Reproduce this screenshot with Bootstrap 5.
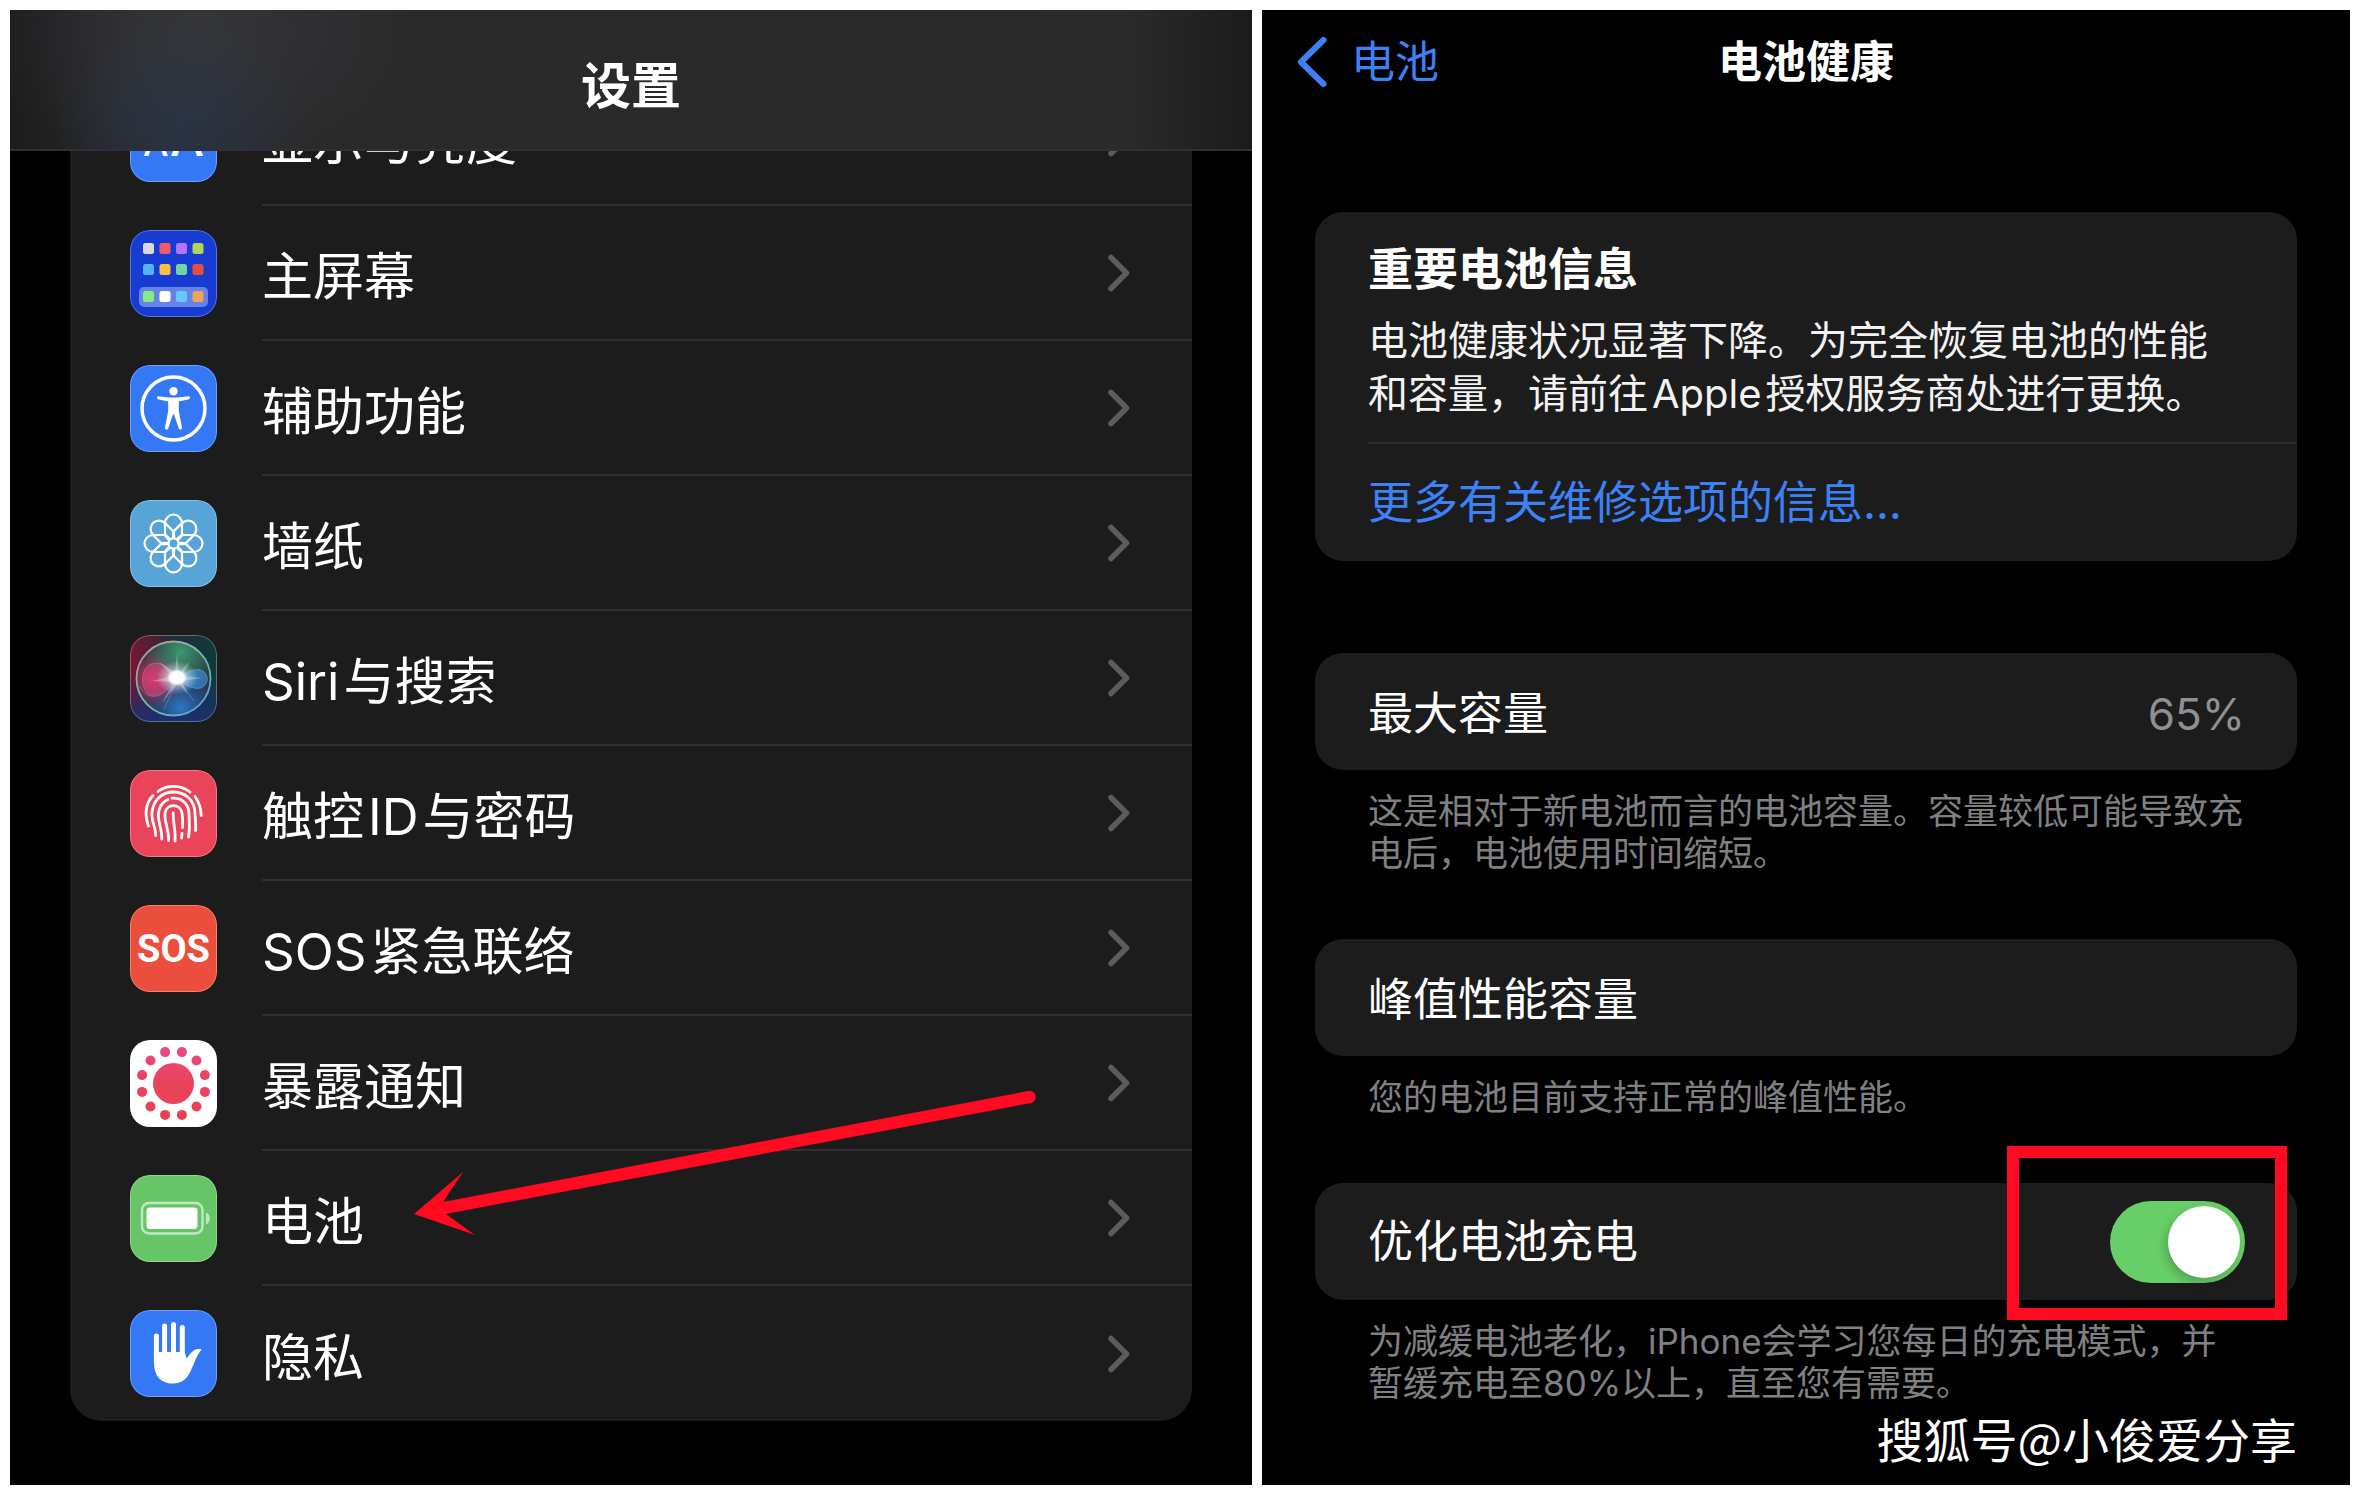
<!DOCTYPE html>
<html lang="zh-CN" data-bs-theme="dark">
<head>
<meta charset="utf-8">
<meta name="viewport" content="width=device-width, initial-scale=1">
<title>设置 – 电池健康</title>
<link href="https://cdn.jsdelivr.net/npm/bootstrap@5.3.0/dist/css/bootstrap.min.css" rel="stylesheet">
<style>
  body { background: #fff; color: #fff; font-family: Inter, "Noto Sans CJK SC", sans-serif; }
  h1, h2, p { margin: 0; }
  a { text-decoration: none; }
  .shots { display: grid; grid-template-columns: minmax(0, 1242fr) minmax(0, 1088fr); min-height: 100vh; padding: 10px; gap: 10px; }
  .shot { background: #000; overflow: hidden; position: relative; }
  .latin { margin: 0 4px; }
  .latin-start { margin-right: 4px; }

  /* settings list */
  .bar-settings {
    position: relative; z-index: 2; height: 141px; padding-top: 12px; border-bottom: 2px solid #303031;
    background:
      radial-gradient(ellipse 130px 110px at 170px 120px, rgba(38, 60, 100, .4), transparent),
      radial-gradient(ellipse 220px 150px at 190px 20px, rgba(64, 66, 72, .5), transparent),
      linear-gradient(90deg, #1c1c1d, #29292a 10%, #2a2a2a 90%, #1b1b1b);
  }
  .bar-settings h1 { font-size: 50px; line-height: 60px; font-weight: 700; }
  .settings-list { margin: -80px 60px 60px; border-radius: 0 0 32px 32px; background: #1c1c1d; overflow: hidden; }
  .settings-item { height: 135px; padding-left: 60px; color: #fff; }
  .settings-item:hover { color: #fff; }
  .app-icon { width: 87px; height: 87px; flex: none; border-radius: 20px; }
  .settings-text { margin-left: 45px; padding-right: 62px; border-bottom: 2px solid #303031; font-size: 51px; line-height: 60px; }
  .settings-item:last-child .settings-text { border-bottom: 0; }
  .chevron { width: 22px; height: 38px; flex: none; }
  .arrow { position: absolute; left: 400px; top: 1069px; width: 640px; height: 170px; z-index: 3; pointer-events: none; }

  /* battery health */
  .shot-health { padding: 0 53px; }
  .bar-health { height: 104px; margin: 0 -18px 98px; display: grid; grid-template-columns: 1fr auto 1fr; align-items: center; font-size: 44px; line-height: 60px; }
  .bar-health h1 { font-size: 44px; line-height: 60px; font-weight: 700; }
  .bar-health a, .more-link { color: #3c82f6; }
  .back-icon { width: 30px; height: 52px; margin-right: 24px; }
  .panel { background: #1c1c1d; border-radius: 28px; padding-left: 53px; }
  .panel-row { height: 117px; padding-right: 52px; font-size: 45px; line-height: 60px; }
  .panel-info { padding: 28px 52px 22px 0; border-bottom: 2px solid #2d2d2f; }
  .panel-info h2 { font-size: 45px; line-height: 60px; font-weight: 700; }
  .panel-info p { font-size: 40px; line-height: 53px; margin-top: 14px; color: #f2f2f2; }
  .percent { color: #8f8f94; font-size: 44px; }
  .footnote { font-size: 35px; line-height: 42px; color: #808083; padding: 20px 0 0 53px; white-space: nowrap; }
  .gap-card { margin-top: 65px; }
  .gap-first { margin-top: 92px; }
  .form-switch .form-check-input.ios-switch {
    width: 135px; height: 82px; margin: 0; float: none; border: 0; border-radius: 41px; background: #68ce67;
    box-shadow: none; position: relative;
  }
  .ios-switch::after { content: ""; position: absolute; right: 5px; top: 5px; width: 72px; height: 72px; border-radius: 50%; background: #fff; box-shadow: -3px 5px 10px rgba(0, 0, 0, .2); }
  .callout-box { position: absolute; right: 10px; top: -37px; width: 280px; height: 174px; border: 12px solid #ff0a20; pointer-events: none; }
  .watermark { font-family: "Noto Sans CJK SC", sans-serif; font-size: 47px; line-height: 60px; padding-top: 4px; text-align: right; }
</style>
</head>
<body>
<svg width="0" height="0" class="position-absolute" aria-hidden="true">
  <defs>
    <symbol id="chev" viewBox="0 0 22 38"><path d="M3 3.5 18.5 19 3 34.500" fill="none" stroke="#5c5c5f" stroke-width="5.500" stroke-linecap="round" stroke-linejoin="round"/></symbol>
    <path id="petal" d="M-3-4-8.500-9V-20A8.500 9 0 0 1 8.500-20V-9L3-4"/>
    <linearGradient id="expo" x1="0" y1="10" x2="0" y2="77" gradientUnits="userSpaceOnUse"><stop stop-color="#e84c7c"/><stop offset=".45" stop-color="#e8445e"/><stop offset="1" stop-color="#ec4052"/></linearGradient>
    <linearGradient id="siriTop" x1="0" x2="1"><stop stop-color="#7a1632"/><stop offset=".5" stop-color="#232a38"/><stop offset="1" stop-color="#0d3c38"/></linearGradient>
    <linearGradient id="siriLow" x1="0" x2="0" y1="0" y2="1"><stop offset=".45" stop-color="#16306e" stop-opacity="0"/><stop offset="1" stop-color="#1c2f70"/></linearGradient>
    <radialGradient id="orbGreen" cx=".6" cy=".15" r=".5"><stop stop-color="#3fa274" stop-opacity=".9"/><stop offset="1" stop-color="#3fa274" stop-opacity="0"/></radialGradient>
    <radialGradient id="orbPink" cx=".22" cy=".5" r=".4"><stop stop-color="#d0346a"/><stop offset="1" stop-color="#c02860" stop-opacity="0"/></radialGradient>
    <radialGradient id="orbBlue" cx=".6" cy=".9" r=".55"><stop stop-color="#2f78c8"/><stop offset="1" stop-color="#1c4aa0" stop-opacity="0"/></radialGradient>
    <radialGradient id="orbGlow"><stop stop-color="#fff"/><stop offset=".35" stop-color="#fff" stop-opacity=".95"/><stop offset=".5" stop-color="#dff2f8" stop-opacity=".5"/><stop offset="1" stop-color="#bfe8f5" stop-opacity="0"/></radialGradient>
    <linearGradient id="orbRim" x1="0" x2="1" y1="0" y2="1"><stop stop-color="#c88a9c"/><stop offset=".5" stop-color="#6fc0a8"/><stop offset="1" stop-color="#5b9be0"/></linearGradient>
    <symbol id="edge" viewBox="0 0 87 87"><rect x=".5" y=".5" width="86" height="86" rx="19.500" fill="none" stroke="#fff" stroke-opacity=".3"/></symbol>
  </defs>
</svg>

<main class="shots">
  <section class="shot shot-settings">
    <header class="bar-settings d-flex align-items-center justify-content-center"><h1>设置</h1></header>
    <nav class="settings-list d-flex flex-column">
      <a href="#" class="settings-item d-flex align-items-center">
        <svg class="app-icon" viewBox="0 0 87 87"><rect width="87" height="87" fill="#3478f6"/><g fill="#fff" font-family="Inter, sans-serif" font-weight="500"><text x="13" y="61" font-size="36">A</text><text x="40" y="61" font-size="48">A</text></g><use href="#edge"/></svg>
        <span class="settings-text d-flex align-items-center justify-content-between flex-grow-1 align-self-stretch"><span class="pt-2">显示与亮度</span><svg class="chevron"><use href="#chev"/></svg></span>
      </a>
      <a href="#" class="settings-item d-flex align-items-center">
        <svg class="app-icon" viewBox="0 0 87 87"><rect width="87" height="87" fill="#173cd2"/><rect x="9" y="57" width="69" height="20" rx="5" fill="#6883e6"/>
          <g><rect x="13" y="13" width="11" height="11" rx="2.500" fill="#d9d9dc"/><rect x="29.500" y="13" width="11" height="11" rx="2.500" fill="#f25a6a"/><rect x="46" y="13" width="11" height="11" rx="2.500" fill="#b176f8"/><rect x="62.500" y="13" width="11" height="11" rx="2.500" fill="#b5d25c"/>
          <rect x="13" y="34" width="11" height="11" rx="2.500" fill="#52b4fa"/><rect x="29.500" y="34" width="11" height="11" rx="2.500" fill="#f8c23c"/><rect x="46" y="34" width="11" height="11" rx="2.500" fill="#6ed6a0"/><rect x="62.500" y="34" width="11" height="11" rx="2.500" fill="#ea4b3c"/>
          <rect x="13" y="61" width="11" height="11" rx="2.500" fill="#86ea86"/><rect x="29.500" y="61" width="11" height="11" rx="2.500" fill="#fff"/><rect x="46" y="61" width="11" height="11" rx="2.500" fill="#66c8fa"/><rect x="62.500" y="61" width="11" height="11" rx="2.500" fill="#f2a25c"/></g><use href="#edge"/></svg>
        <span class="settings-text d-flex align-items-center justify-content-between flex-grow-1 align-self-stretch"><span class="pt-2">主屏幕</span><svg class="chevron"><use href="#chev"/></svg></span>
      </a>
      <a href="#" class="settings-item d-flex align-items-center">
        <svg class="app-icon" viewBox="0 0 87 87"><rect width="87" height="87" fill="#3478f6"/><circle cx="43.500" cy="43.500" r="31.500" fill="none" stroke="#fff" stroke-width="3.500"/><circle cx="43.500" cy="26.200" r="4.200" fill="#fff"/><path d="M28.500 31.200 39 32.400H48L58.500 31.200A1.600 1.600 0 0 1 59 34.300L48.800 36.500V46L52 62.500A1.700 1.700 0 0 1 48.800 63.600L44 49.500H43L38.200 63.600A1.700 1.700 0 0 1 35 62.500L38.200 46V36.500L28 34.300A1.600 1.600 0 0 1 28.500 31.200Z" fill="#fff"/><use href="#edge"/></svg>
        <span class="settings-text d-flex align-items-center justify-content-between flex-grow-1 align-self-stretch"><span class="pt-2">辅助功能</span><svg class="chevron"><use href="#chev"/></svg></span>
      </a>
      <a href="#" class="settings-item d-flex align-items-center">
        <svg class="app-icon" viewBox="0 0 87 87"><rect width="87" height="87" fill="#57a5d8"/><g transform="translate(43.500 43.500)" fill="none" stroke="#fff" stroke-width="2.200" stroke-linejoin="round"><use href="#petal"/><use href="#petal" transform="rotate(45)"/><use href="#petal" transform="rotate(90)"/><use href="#petal" transform="rotate(135)"/><use href="#petal" transform="rotate(180)"/><use href="#petal" transform="rotate(225)"/><use href="#petal" transform="rotate(270)"/><use href="#petal" transform="rotate(315)"/><circle r="5"/></g><use href="#edge"/></svg>
        <span class="settings-text d-flex align-items-center justify-content-between flex-grow-1 align-self-stretch"><span class="pt-2">墙纸</span><svg class="chevron"><use href="#chev"/></svg></span>
      </a>
      <a href="#" class="settings-item d-flex align-items-center">
        <svg class="app-icon" viewBox="0 0 87 87"><rect width="87" height="87" fill="url(#siriTop)"/><rect width="87" height="87" fill="url(#siriLow)"/>
          <circle cx="43.500" cy="43.500" r="37" fill="#2a3640"/><circle cx="43.500" cy="43.500" r="37" fill="url(#orbBlue)"/><circle cx="43.500" cy="43.500" r="37" fill="url(#orbPink)"/><circle cx="43.500" cy="43.500" r="37" fill="url(#orbGreen)"/>
          <path d="M47 43C40 32 30 26 21 29 10 34 10 55 20 60 30 62 38 54 47 43Z" fill="#e0447c" fill-opacity=".5" stroke="#e88aac" stroke-opacity=".4"/><path d="M47 43C56 37 66 32 73 36 80 41 78 50 71 53 62 55 54 49 47 43Z" fill="#3f93ea" fill-opacity=".6" stroke="#7fc4f2" stroke-opacity=".4"/><path d="M9 50C18 68 34 64 47 43M48 44 64 66M48 44 34 74" fill="none" stroke="#8ab4dc" stroke-opacity=".4"/>
          <path d="M47 18 49 38 60 26 52 41 72 43 52 46 58 60 48 48 32 68 43 47 22 46 42 41 28 26 45 38Z" fill="#fff" fill-opacity=".3"/>
          <ellipse cx="47" cy="42.500" rx="21" ry="17" fill="url(#orbGlow)"/><circle cx="43.500" cy="43.500" r="37" fill="none" stroke="url(#orbRim)" stroke-width="1.800"/><use href="#edge"/></svg>
        <span class="settings-text d-flex align-items-center justify-content-between flex-grow-1 align-self-stretch"><span class="pt-2"><span class="latin-start">Siri</span>与搜索</span><svg class="chevron"><use href="#chev"/></svg></span>
      </a>
      <a href="#" class="settings-item d-flex align-items-center">
        <svg class="app-icon" viewBox="0 0 87 87"><rect width="87" height="87" fill="#ea445a"/><g fill="none" stroke="#fff" stroke-width="2.800" stroke-linecap="round"><path d="M28 21.500C37 14.500 51 14.500 60 22M23 25.500C16 33 14 43 18.500 56M65 26.500C69 32 71 38 71.200 45.500"/><path d="M25.700 65.500C26 57 21 52 22 42 23.500 30 32 22 43.500 22 56 22 65 31 65 44 65.500 51 66 55 65.600 60.500"/><path d="M31.700 69C32.500 60 27.500 52 28.500 43 29.500 36 33 31.500 38 29.500M42 28.200C52 27.500 58.500 34 59 43 59.500 52 60 60 58.500 67"/><path d="M38.500 70.500C39.500 61 34 52 35 43 36.500 33.500 50 33 52 43 52.800 48 52.800 53 52.500 57.500M52 63.500 51.500 68"/><path d="M43.200 43C43 53 46 62 45 71"/></g><use href="#edge"/></svg>
        <span class="settings-text d-flex align-items-center justify-content-between flex-grow-1 align-self-stretch"><span class="pt-2">触控<span class="latin">ID</span>与密码</span><svg class="chevron"><use href="#chev"/></svg></span>
      </a>
      <a href="#" class="settings-item d-flex align-items-center">
        <svg class="app-icon" viewBox="0 0 87 87"><rect width="87" height="87" fill="#eb4e3d"/><text x="43.500" y="57" text-anchor="middle" font-family="Roboto, sans-serif" font-weight="700" font-size="38" fill="#fff">SOS</text><use href="#edge"/></svg>
        <span class="settings-text d-flex align-items-center justify-content-between flex-grow-1 align-self-stretch"><span class="pt-2"><span class="latin-start">SOS</span>紧急联络</span><svg class="chevron"><use href="#chev"/></svg></span>
      </a>
      <a href="#" class="settings-item d-flex align-items-center">
        <svg class="app-icon" viewBox="0 0 87 87"><rect width="87" height="87" fill="#fff"/><g fill="url(#expo)"><circle cx="43.500" cy="43.500" r="20.500"/><circle cx="51.900" cy="12.100" r="5"/><circle cx="66.500" cy="20.500" r="5"/><circle cx="74.900" cy="35.100" r="5"/><circle cx="74.900" cy="51.900" r="5"/><circle cx="66.500" cy="66.500" r="5"/><circle cx="51.900" cy="74.900" r="5"/><circle cx="35.100" cy="74.900" r="5"/><circle cx="20.500" cy="66.500" r="5"/><circle cx="12.100" cy="51.900" r="5"/><circle cx="12.100" cy="35.100" r="5"/><circle cx="20.500" cy="20.500" r="5"/><circle cx="35.100" cy="12.100" r="5"/></g></svg>
        <span class="settings-text d-flex align-items-center justify-content-between flex-grow-1 align-self-stretch"><span class="pt-2">暴露通知</span><svg class="chevron"><use href="#chev"/></svg></span>
      </a>
      <a href="#" class="settings-item d-flex align-items-center">
        <svg class="app-icon" viewBox="0 0 87 87"><rect width="87" height="87" fill="#66c667"/><rect x="12" y="28" width="60.500" height="30.500" rx="7" fill="none" stroke="#fff" stroke-opacity=".6" stroke-width="2.400"/><rect x="16.500" y="32.500" width="51" height="21.500" rx="3.500" fill="#fff"/><path d="M76 37.500C81 39 81 48 76 49.500Z" fill="#fff" fill-opacity=".6"/><use href="#edge"/></svg>
        <span class="settings-text d-flex align-items-center justify-content-between flex-grow-1 align-self-stretch"><span class="pt-2">电池</span><svg class="chevron"><use href="#chev"/></svg></span>
      </a>
      <a href="#" class="settings-item d-flex align-items-center">
        <svg class="app-icon" viewBox="0 0 87 87"><rect width="87" height="87" fill="#3478f6"/><path d="M26.400 26V46M34.600 16V46M43.500 14.500V46M52.300 17.500V48" stroke="#fff" stroke-width="5" stroke-linecap="round"/><path d="M23.900 42H54.800L56.500 48.500 60 44C63 40 67.500 38 71.500 39.500 67 45 65 51 62 58 58 68 53 73.500 42.500 73.500 31 73.500 23.900 66 23.900 52Z" fill="#fff"/><use href="#edge"/></svg>
        <span class="settings-text d-flex align-items-center justify-content-between flex-grow-1 align-self-stretch"><span class="pt-2">隐私</span><svg class="chevron"><use href="#chev"/></svg></span>
      </a>
    </nav>
    <svg class="arrow" viewBox="0 0 640 170" aria-hidden="true"><path d="M14 146 63 104 43 134 628 23A6 6 0 0 1 631 35L46 146 75 167Z" transform="translate(-10 -11)" fill="#ff0a20"/></svg>
  </section>

  <section class="shot shot-health">
    <header class="bar-health">
      <a href="#" class="d-flex align-items-center"><svg class="back-icon" viewBox="0 0 30 52"><path d="M26.500 4 4 26 26.500 48" fill="none" stroke="#3c82f6" stroke-width="6" stroke-linecap="round" stroke-linejoin="round"/></svg>电池</a>
      <h1>电池健康</h1>
    </header>

    <div class="panel">
      <div class="panel-info">
        <h2>重要电池信息</h2>
        <p class="text-nowrap">电池健康状况显著下降。为完全恢复电池的性能<br>和容量，请前往<span class="latin">Apple</span>授权服务商处进行更换。</p>
      </div>
      <a href="#" class="more-link panel-row d-flex align-items-center">更多有关维修选项的信息…</a>
    </div>

    <div class="panel gap-first"><div class="panel-row d-flex align-items-center justify-content-between pt-1"><span>最大容量</span><span class="percent">65%</span></div></div>
    <p class="footnote">这是相对于新电池而言的电池容量。容量较低可能导致充<br>电后，电池使用时间缩短。</p>

    <div class="panel gap-card"><div class="panel-row d-flex align-items-center pt-1">峰值性能容量</div></div>
    <p class="footnote">您的电池目前支持正常的峰值性能。</p>

    <div class="panel gap-card position-relative">
      <div class="panel-row form-switch d-flex align-items-center justify-content-between ps-0">
        <label for="optimized">优化电池充电</label>
        <input class="form-check-input ios-switch" type="checkbox" role="switch" id="optimized" checked>
      </div>
      <div class="callout-box"></div>
    </div>
    <p class="footnote">为减缓电池老化，iPhone会学习您每日的充电模式，并<br>暂缓充电至80%以上，直至您有需要。</p>
    <p class="watermark">搜狐号@小俊爱分享</p>
  </section>
</main>
<script src="https://cdn.jsdelivr.net/npm/bootstrap@5.3.0/dist/js/bootstrap.bundle.min.js"></script>
</body>
</html>
